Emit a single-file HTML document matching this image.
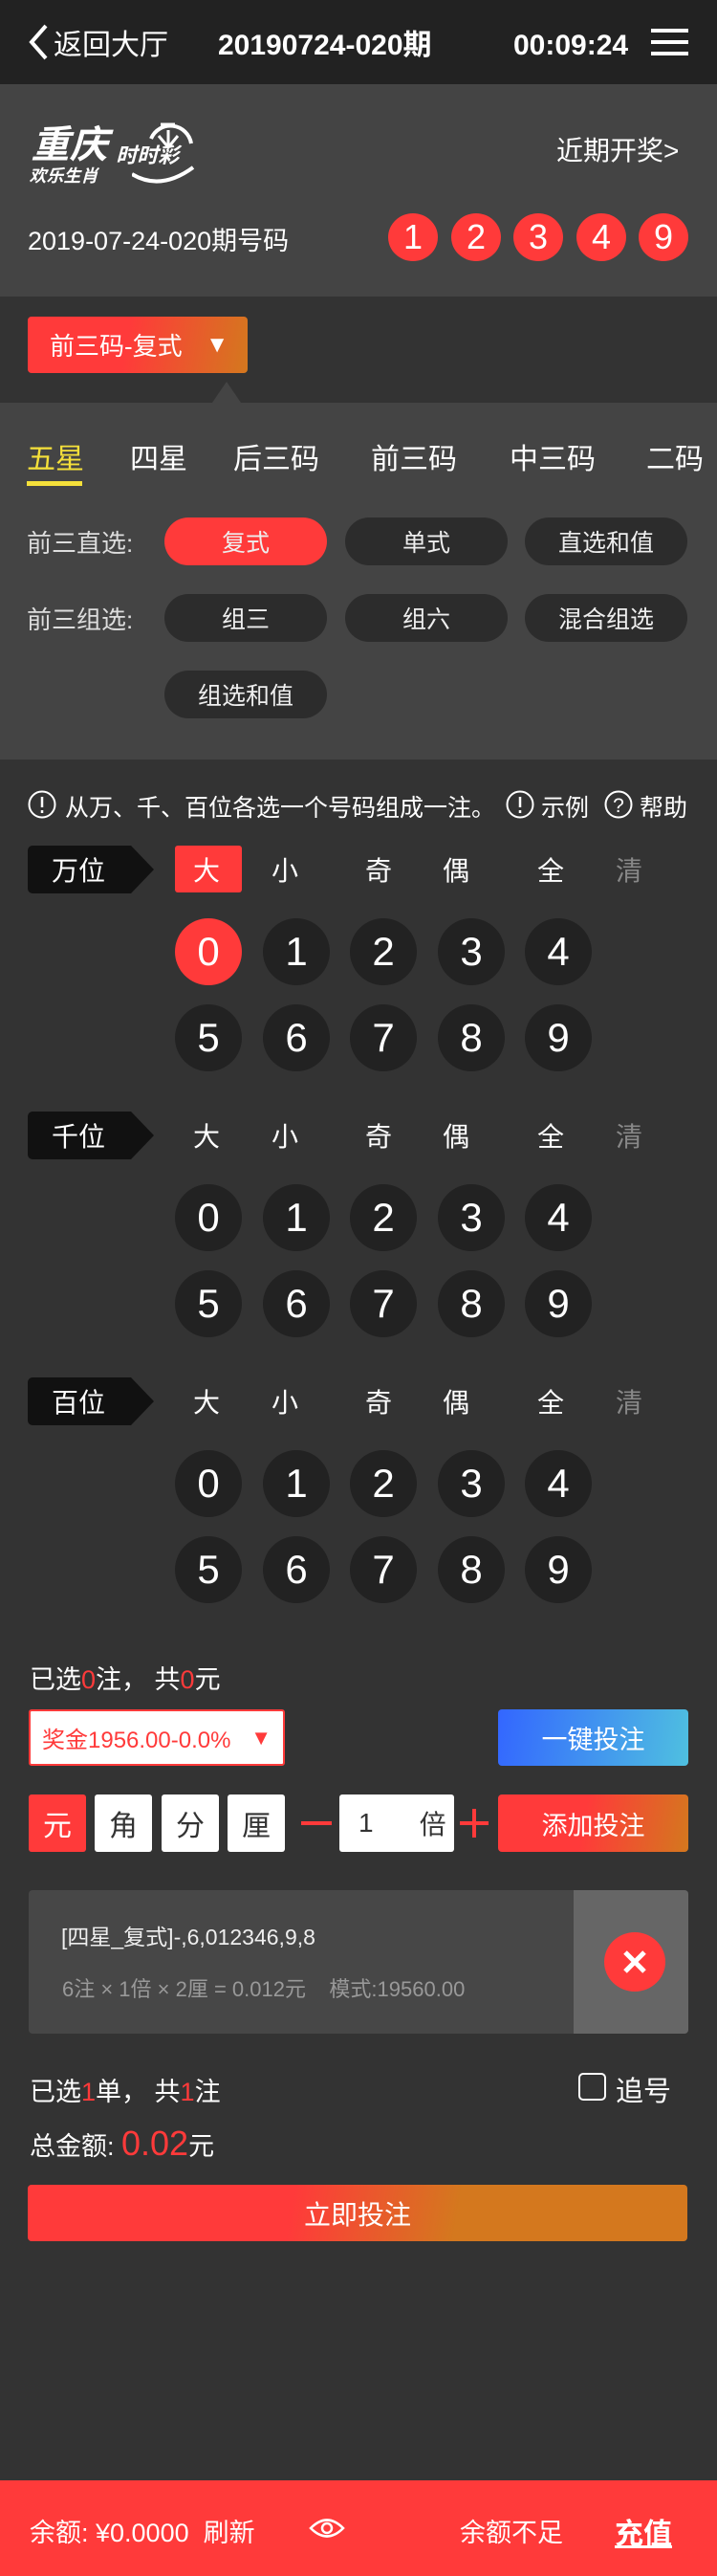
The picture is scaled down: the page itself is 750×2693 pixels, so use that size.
<!DOCTYPE html>
<html><head><meta charset="utf-8"><style>
*{margin:0;padding:0;box-sizing:border-box}
body{width:750px;height:2693px;background:#333;font-family:"Liberation Sans","Noto Sans CJK SC",sans-serif;color:#fff;position:relative;overflow:hidden}
.a{position:absolute;white-space:nowrap}
.c{display:flex;align-items:center;justify-content:center}
.ball{position:absolute;width:70px;height:70px;border-radius:50%;background:#222;font-size:42px;display:flex;align-items:center;justify-content:center;color:#fff}
.pill{position:absolute;width:170px;height:50px;border-radius:25px;background:#2c2c2c;font-size:25px;display:flex;align-items:center;justify-content:center;color:#eee}
.lab{position:absolute;left:29px;width:108px;height:50px;background:#111;border-radius:5px 0 0 5px;font-size:28px;display:flex;align-items:center;padding-left:25px}
.lab:after{content:"";position:absolute;left:108px;top:0;border-left:24px solid #111;border-top:25px solid transparent;border-bottom:25px solid transparent}
.op{position:absolute;font-size:28px;transform:translate(-50%,-50%)}
.rb{position:absolute;width:52px;height:50px;border-radius:50%;background:#ff3a3a;font-size:36px;display:flex;align-items:center;justify-content:center;top:223px}
.unit{position:absolute;top:1876px;width:60px;height:60px;background:#fff;color:#333;border-radius:3px;font-size:30px;display:flex;align-items:center;justify-content:center}
.h{position:absolute;top:0;height:88px;display:flex;align-items:center;font-size:30px;white-space:nowrap}
</style></head><body>
<!-- header -->
<div class="a" style="left:0;top:0;width:750px;height:88px;background:#222"></div>
<svg class="a" style="left:28px;top:24px" width="24" height="40"><path d="M20 3 L5 20 L20 37" stroke="#fff" stroke-width="4" fill="none"/></svg>
<div class="h" style="left:56px">返回大厅</div>
<div class="h" style="left:228px;font-weight:bold">20190724-020期</div>
<div class="h" style="left:537px;font-weight:bold;padding-top:8px">00:09:24</div>
<div class="a" style="left:681px;top:30px;width:39px;height:4px;background:#fff"></div>
<div class="a" style="left:681px;top:42px;width:39px;height:4px;background:#fff"></div>
<div class="a" style="left:681px;top:54px;width:39px;height:4px;background:#fff"></div>
<!-- info -->
<div class="a" style="left:0;top:88px;width:750px;height:222px;background:#444"></div>
<div class="a" style="left:36px;top:130px;font-size:40px;line-height:44px;font-weight:bold;transform:skewX(-15deg)">重庆</div>
<div class="a" style="left:123px;top:150px;font-size:22px;line-height:26px;font-weight:bold;transform:skewX(-15deg)">时时彩</div>
<div class="a" style="left:32px;top:174px;font-size:18px;line-height:20px;font-weight:bold;transform:skewX(-15deg)">欢乐生肖</div>
<svg class="a" style="left:138px;top:120px" width="70" height="75"><path d="M20 25 A22 22 0 0 1 62 30" stroke="#fff" stroke-width="4" fill="none"/><path d="M30 10 L45 10 M38 16 L38 34 M28 22 L38 34 L48 22" stroke="#fff" stroke-width="3" fill="none"/><path d="M0 62 Q30 80 64 55" stroke="#fff" stroke-width="4" fill="none"/></svg>
<div class="a" style="left:582px;top:136px;font-size:28px">近期开奖&gt;</div>
<div class="a" style="left:29px;top:230px;font-size:27px">2019-07-24-020期号码</div>
<div class="rb" style="left:406px">1</div><div class="rb" style="left:472px">2</div><div class="rb" style="left:537px">3</div><div class="rb" style="left:603px">4</div><div class="rb" style="left:668px">9</div>
<!-- dropdown band -->
<div class="a" style="left:0;top:310px;width:750px;height:111px;background:#333"></div>
<div class="a c" style="left:29px;top:331px;width:230px;height:59px;border-radius:4px;background:linear-gradient(100deg,#ff3a3a 45%,#d4781e);font-size:26px;justify-content:flex-start;padding-left:23px">前三码-复式<span style="position:absolute;right:20px;font-size:24px">▼</span></div>
<div class="a" style="left:222px;top:399px;border-bottom:22px solid #444;border-left:15px solid transparent;border-right:15px solid transparent"></div>
<!-- tabs -->
<div class="a" style="left:0;top:421px;width:750px;height:373px;background:#444"></div>
<div class="a" style="left:28px;top:455px;font-size:30px;color:#f5e03a">五星</div>
<div class="a" style="left:28px;top:503px;width:58px;height:5px;background:#f5e03a"></div>
<div class="a" style="left:136px;top:455px;font-size:30px">四星</div>
<div class="a" style="left:244px;top:455px;font-size:30px">后三码</div>
<div class="a" style="left:388px;top:455px;font-size:30px">前三码</div>
<div class="a" style="left:533px;top:455px;font-size:30px">中三码</div>
<div class="a" style="left:676px;top:455px;font-size:30px">二码</div>
<div class="a" style="left:28px;top:548px;font-size:26px;color:#ddd">前三直选:</div>
<div class="a" style="left:28px;top:628px;font-size:26px;color:#ddd">前三组选:</div>
<div class="pill" style="left:172px;top:541px;background:#ff3a3a">复式</div>
<div class="pill" style="left:361px;top:541px">单式</div>
<div class="pill" style="left:549px;top:541px">直选和值</div>
<div class="pill" style="left:172px;top:621px">组三</div>
<div class="pill" style="left:361px;top:621px">组六</div>
<div class="pill" style="left:549px;top:621px">混合组选</div>
<div class="pill" style="left:172px;top:701px">组选和值</div>
<!-- hint -->
<svg class="a" style="left:28px;top:825px" width="32" height="32"><circle cx="16" cy="16" r="13.5" stroke="#fff" stroke-width="2" fill="none"/><path d="M16 8v11M16 22v3" stroke="#fff" stroke-width="2.5"/></svg>
<div class="a" style="left:68px;top:825px;font-size:25px">从万、千、百位各选一个号码组成一注。</div>
<svg class="a" style="left:528px;top:825px" width="32" height="32"><circle cx="16" cy="16" r="13.5" stroke="#fff" stroke-width="2" fill="none"/><path d="M16 8v11M16 22v3" stroke="#fff" stroke-width="2.5"/></svg>
<div class="a" style="left:566px;top:825px;font-size:25px">示例</div>
<svg class="a" style="left:631px;top:825px" width="32" height="32"><circle cx="16" cy="16" r="13.5" stroke="#fff" stroke-width="2" fill="none"/><text x="16" y="24" font-size="21" fill="#fff" text-anchor="middle" font-family="Liberation Sans">?</text></svg>
<div class="a" style="left:669px;top:825px;font-size:25px">帮助</div>

<!-- sections -->
<div class="lab" style="top:884px">万位</div>
<div class="a" style="left:183px;top:884px;width:70px;height:49px;background:#ff3a3a;border-radius:3px"></div>
<div class="op" style="left:216px;top:909px">大</div><div class="op" style="left:298px;top:909px">小</div><div class="op" style="left:396px;top:909px">奇</div><div class="op" style="left:477px;top:909px">偶</div><div class="op" style="left:576px;top:909px">全</div><div class="op" style="left:658px;top:909px;color:#888">清</div>
<div class="ball" style="left:183px;top:960px;background:#ff3a3a">0</div><div class="ball" style="left:275px;top:960px">1</div><div class="ball" style="left:366px;top:960px">2</div><div class="ball" style="left:458px;top:960px">3</div><div class="ball" style="left:549px;top:960px">4</div>
<div class="ball" style="left:183px;top:1050px">5</div><div class="ball" style="left:275px;top:1050px">6</div><div class="ball" style="left:366px;top:1050px">7</div><div class="ball" style="left:458px;top:1050px">8</div><div class="ball" style="left:549px;top:1050px">9</div>

<div class="lab" style="top:1162px">千位</div>
<div class="op" style="left:216px;top:1187px">大</div><div class="op" style="left:298px;top:1187px">小</div><div class="op" style="left:396px;top:1187px">奇</div><div class="op" style="left:477px;top:1187px">偶</div><div class="op" style="left:576px;top:1187px">全</div><div class="op" style="left:658px;top:1187px;color:#888">清</div>
<div class="ball" style="left:183px;top:1238px">0</div><div class="ball" style="left:275px;top:1238px">1</div><div class="ball" style="left:366px;top:1238px">2</div><div class="ball" style="left:458px;top:1238px">3</div><div class="ball" style="left:549px;top:1238px">4</div>
<div class="ball" style="left:183px;top:1328px">5</div><div class="ball" style="left:275px;top:1328px">6</div><div class="ball" style="left:366px;top:1328px">7</div><div class="ball" style="left:458px;top:1328px">8</div><div class="ball" style="left:549px;top:1328px">9</div>

<div class="lab" style="top:1440px">百位</div>
<div class="op" style="left:216px;top:1465px">大</div><div class="op" style="left:298px;top:1465px">小</div><div class="op" style="left:396px;top:1465px">奇</div><div class="op" style="left:477px;top:1465px">偶</div><div class="op" style="left:576px;top:1465px">全</div><div class="op" style="left:658px;top:1465px;color:#888">清</div>
<div class="ball" style="left:183px;top:1516px">0</div><div class="ball" style="left:275px;top:1516px">1</div><div class="ball" style="left:366px;top:1516px">2</div><div class="ball" style="left:458px;top:1516px">3</div><div class="ball" style="left:549px;top:1516px">4</div>
<div class="ball" style="left:183px;top:1606px">5</div><div class="ball" style="left:275px;top:1606px">6</div><div class="ball" style="left:366px;top:1606px">7</div><div class="ball" style="left:458px;top:1606px">8</div><div class="ball" style="left:549px;top:1606px">9</div>

<!-- bottom controls -->
<div class="a" style="left:31px;top:1734px;font-size:27px">已选<span style="color:#ff3a3a">0</span>注， 共<span style="color:#ff3a3a">0</span>元</div>
<div class="a c" style="left:30px;top:1787px;width:268px;height:59px;background:#fff;border:2px solid #ff3a3a;border-radius:3px;color:#ff3a3a;font-size:24px;justify-content:flex-start;padding-left:12px">奖金1956.00-0.0%<span style="position:absolute;right:12px;font-size:22px">▼</span></div>
<div class="a c" style="left:521px;top:1787px;width:199px;height:59px;border-radius:4px;background:linear-gradient(100deg,#3366ff,#4fc0e0);font-size:27px">一键投注</div>
<div class="unit" style="left:30px;background:#ff3a3a;color:#fff">元</div>
<div class="unit" style="left:99px">角</div>
<div class="unit" style="left:169px">分</div>
<div class="unit" style="left:238px">厘</div>
<div class="a" style="left:315px;top:1904px;width:32px;height:4px;background:#ff3a3a"></div>
<div class="a" style="left:355px;top:1876px;width:120px;height:60px;background:#fff;border-radius:3px;color:#333;font-size:28px;display:flex;align-items:center;padding-left:20px">1<span style="margin-left:48px">倍</span></div>
<div class="a" style="left:481px;top:1904px;width:30px;height:4px;background:#ff3a3a"></div>
<div class="a" style="left:494px;top:1891px;width:4px;height:30px;background:#ff3a3a"></div>
<div class="a c" style="left:521px;top:1876px;width:199px;height:60px;border-radius:4px;background:linear-gradient(100deg,#ff3a3a 45%,#d4781e);font-size:27px">添加投注</div>
<div class="a" style="left:30px;top:1976px;width:690px;height:150px;background:#474747;border-radius:4px"></div>
<div class="a" style="left:600px;top:1976px;width:120px;height:150px;background:#666;border-radius:0 4px 4px 0"></div>
<div class="a" style="left:632px;top:2020px;width:64px;height:62px;border-radius:50%;background:#ff3a3a"></div>
<svg class="a" style="left:651px;top:2038px" width="26" height="26"><path d="M3 3L23 23M23 3L3 23" stroke="#fff" stroke-width="5"/></svg>
<div class="a" style="left:64px;top:2006px;font-size:23px;color:#eee">[四星_复式]-,6,012346,9,8</div>
<div class="a" style="left:65px;top:2062px;font-size:22px;color:#999">6注 × 1倍 × 2厘 = 0.012元 &nbsp;&nbsp; 模式:19560.00</div>
<div class="a" style="left:31px;top:2165px;font-size:27px">已选<span style="color:#ff3a3a">1</span>单， 共<span style="color:#ff3a3a">1</span>注</div>
<div class="a" style="left:605px;top:2167px;width:29px;height:29px;border:2px solid #fff;border-radius:5px"></div>
<div class="a" style="left:644px;top:2163px;font-size:29px">追号</div>
<div class="a" style="left:31px;top:2220px;font-size:27px">总金额: <span style="color:#ff3a3a;font-size:36px">0.02</span>元</div>
<div class="a c" style="left:29px;top:2284px;width:690px;height:59px;border-radius:4px;background:linear-gradient(100deg,#ff3a3a 40%,#d4781e 65%);font-size:28px">立即投注</div>
<!-- footer -->
<div class="a" style="left:0;top:2593px;width:750px;height:100px;background:#ff3a3a"></div>
<div class="a" style="left:31px;top:2626px;font-size:27px">余额: ¥0.0000 &nbsp;刷新</div>
<svg class="a" style="left:323px;top:2630px" width="38" height="26"><path d="M2 13 Q19 -4 36 13 Q19 30 2 13Z" stroke="#fff" stroke-width="2.5" fill="none"/><circle cx="19" cy="13" r="5" stroke="#fff" stroke-width="2.5" fill="none"/></svg>
<div class="a" style="left:481px;top:2626px;font-size:27px">余额不足</div>
<div class="a" style="left:643px;top:2624px;font-size:30px;font-weight:bold;text-decoration:underline">充值</div>
</body></html>
